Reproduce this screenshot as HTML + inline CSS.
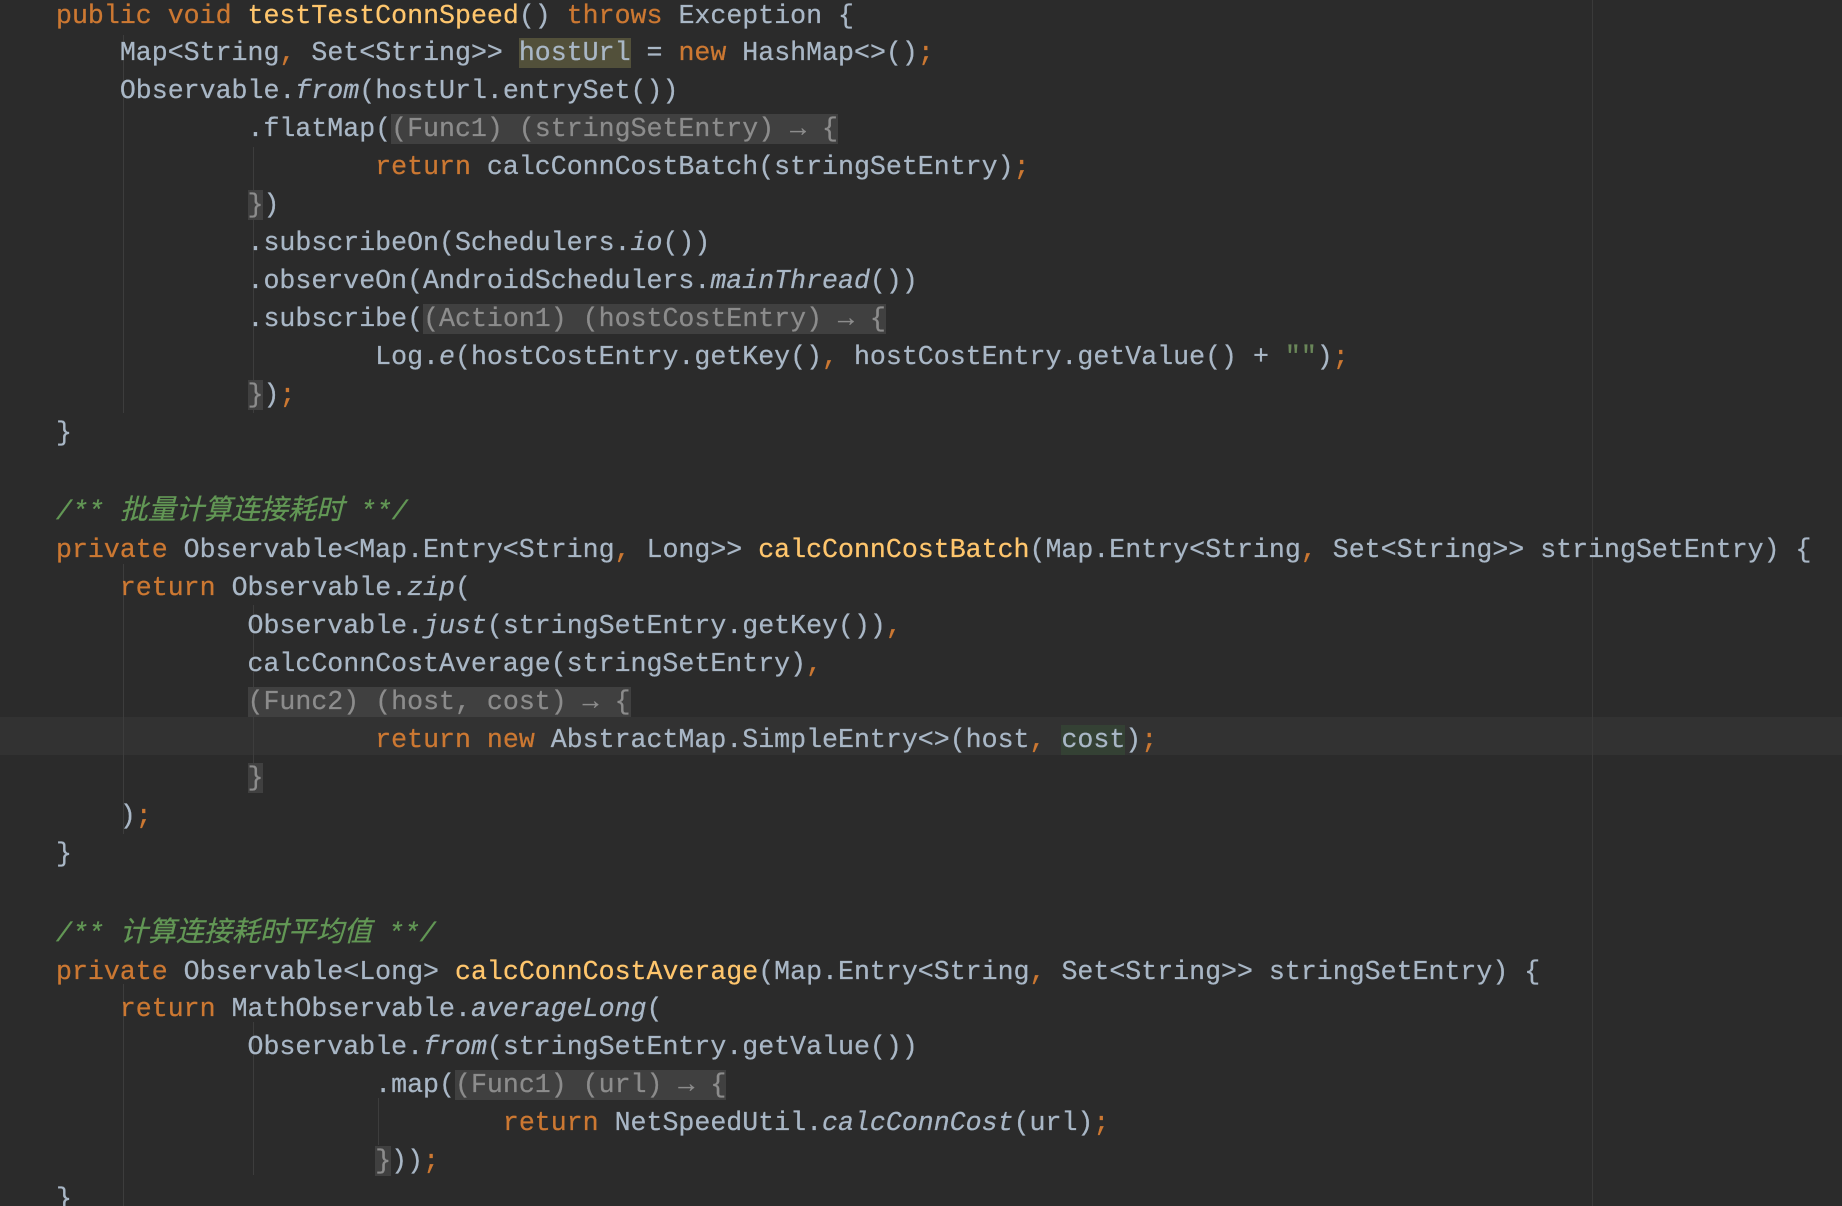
<!DOCTYPE html>
<html><head><meta charset="utf-8"><style>
html,body{margin:0;padding:0;background:#2b2b2b;width:1842px;height:1206px;overflow:hidden;position:relative}
pre{position:absolute;left:56px;top:-2.5px;margin:0;font-family:"Liberation Mono","Noto Sans CJK SC",monospace;font-size:26.6px;line-height:37.92px;color:#a9b7c6;z-index:2;-webkit-text-stroke:0.25px currentColor}
.k{color:#cc7832}.m{color:#ffc66d}.i{font-style:italic}
.c{color:#629755;font-style:italic}.cj{font-family:"Noto Sans CJK SC",sans-serif;font-size:28px}
.f{background:#404040;color:#8c8c8c}
.hu{background:#52503a}.hc{background:#344134}
.g{position:absolute;width:1px;background:#3d3d3d;z-index:1}
.cur{position:absolute;left:0;width:1842px;top:717px;height:38px;background:#323232;z-index:0}
</style></head><body>
<div class="cur"></div>
<div class="g" style="left:1592px;top:0;height:1206px;background:#3a3a3a"></div>
<div class="g" style="left:123px;top:35px;height:378px"></div>
<div class="g" style="left:253px;top:147px;height:266px"></div>
<div class="g" style="left:123px;top:564px;height:270px"></div>
<div class="g" style="left:253px;top:605px;height:188px"></div>
<div class="g" style="left:123px;top:984px;height:222px"></div>
<div class="g" style="left:253px;top:1022px;height:153px"></div>
<div class="g" style="left:378px;top:1098px;height:47px"></div>
<pre><span class="k">public void </span><span class="m">testTestConnSpeed</span>() <span class="k">throws </span>Exception {
    Map&lt;String<span class="k">, </span>Set&lt;String&gt;&gt; <span class="hu">hostUrl</span> = <span class="k">new </span>HashMap&lt;&gt;()<span class="k">;</span>
    Observable.<span class="i">from</span>(hostUrl.entrySet())
            .flatMap(<span class="f">(Func1) (stringSetEntry) → {</span>
                    <span class="k">return </span>calcConnCostBatch(stringSetEntry)<span class="k">;</span>
            <span class="f">}</span>)
            .subscribeOn(Schedulers.<span class="i">io</span>())
            .observeOn(AndroidSchedulers.<span class="i">mainThread</span>())
            .subscribe(<span class="f">(Action1) (hostCostEntry) → {</span>
                    Log.<span class="i">e</span>(hostCostEntry.getKey()<span class="k">, </span>hostCostEntry.getValue() + <span style="color:#6a8759">""</span>)<span class="k">;</span>
            <span class="f">}</span>)<span class="k">;</span>
}

<span class="c">/** <span class="cj">批量计算连接耗时</span> **/</span>
<span class="k">private </span>Observable&lt;Map.Entry&lt;String<span class="k">, </span>Long&gt;&gt; <span class="m">calcConnCostBatch</span>(Map.Entry&lt;String<span class="k">, </span>Set&lt;String&gt;&gt; stringSetEntry) {
    <span class="k">return </span>Observable.<span class="i">zip</span>(
            Observable.<span class="i">just</span>(stringSetEntry.getKey())<span class="k">,</span>
            calcConnCostAverage(stringSetEntry)<span class="k">,</span>
            <span class="f">(Func2) (host, cost) → {</span>
                    <span class="k">return new </span>AbstractMap.SimpleEntry&lt;&gt;(host<span class="k">, </span><span class="hc">cost</span>)<span class="k">;</span>
            <span class="f">}</span>
    )<span class="k">;</span>
}

<span class="c">/** <span class="cj">计算连接耗时平均值</span> **/</span>
<span class="k">private </span>Observable&lt;Long&gt; <span class="m">calcConnCostAverage</span>(Map.Entry&lt;String<span class="k">, </span>Set&lt;String&gt;&gt; stringSetEntry) {
    <span class="k">return </span>MathObservable.<span class="i">averageLong</span>(
            Observable.<span class="i">from</span>(stringSetEntry.getValue())
                    .map(<span class="f">(Func1) (url) → {</span>
                            <span class="k">return </span>NetSpeedUtil.<span class="i">calcConnCost</span>(url)<span class="k">;</span>
                    <span class="f">}</span>))<span class="k">;</span>
}</pre>
</body></html>
